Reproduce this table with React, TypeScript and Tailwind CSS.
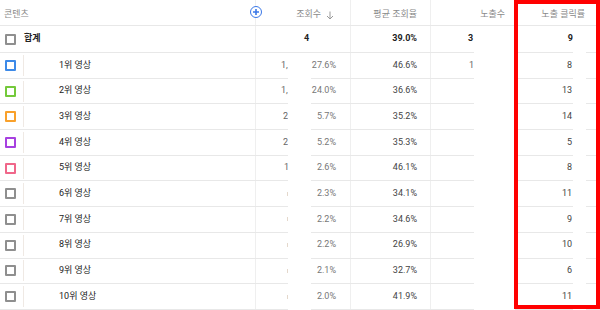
import React from "react";

const rows = [
  { rank: 1, box: "border-[#3d8ae8]", views: "1,", vw: 7, share: "27.6%", avg: "46.6%", imp: "1", ctr: "8" },
  { rank: 2, box: "border-[#74c93b]", views: "1,", vw: 7, share: "24.0%", avg: "36.6%", imp: "", ctr: "13" },
  { rank: 3, box: "border-[#f9a12b]", views: "2", vw: 5, share: "5.7%", avg: "35.2%", imp: "", ctr: "14" },
  { rank: 4, box: "border-[#a740e0]", views: "2", vw: 5, share: "5.2%", avg: "35.3%", imp: "", ctr: "5" },
  { rank: 5, box: "border-[#f0678a]", views: "1", vw: 4, share: "2.6%", avg: "46.1%", imp: "", ctr: "8" },
  { rank: 6, box: "border-[#8f8f8f]", views: "", vw: 0, share: "2.3%", avg: "34.1%", imp: "", ctr: "11" },
  { rank: 7, box: "border-[#8f8f8f]", views: "", vw: 0, share: "2.2%", avg: "34.6%", imp: "", ctr: "9" },
  { rank: 8, box: "border-[#8f8f8f]", views: "", vw: 0, share: "2.2%", avg: "26.9%", imp: "", ctr: "10" },
  { rank: 9, box: "border-[#8f8f8f]", views: "", vw: 0, share: "2.1%", avg: "32.7%", imp: "", ctr: "6" },
  { rank: 10, box: "border-[#8f8f8f]", views: "", vw: 0, share: "2.0%", avg: "41.9%", imp: "", ctr: "11" },
];

const Box = ({ cls }: { cls: string }) => (
  <div className={`w-[11px] h-[11px] rounded-[1px] shrink-0 border-2 ${cls}`} />
);

const App = () => {
  return (
    <div
      className="relative w-[600px] h-[310px] overflow-hidden bg-white text-[9px] text-[#333]"
      style={{ fontFamily: "Roboto, 'Noto Sans CJK KR', sans-serif" }}
    >
      {/* header */}
      <div className="grid grid-cols-[255px_95px_80px_85px_85px] h-[26px] border-b border-[#e8e8e8] text-[#8a8a8a]">
        <div className="flex items-center pt-[5px] pl-[4px]">콘텐츠</div>
        <div className="relative border-l border-[#efefef] flex items-center justify-end pt-[5px] pr-[16px] gap-[5px]">
          <span>조회수</span>
          <svg width="8" height="9" viewBox="0 0 8 9">
            <path d="M4 0.5v7.5M1 5l3 3 3-3" stroke="#9a9a9a" strokeWidth="1" fill="none" />
          </svg>
          <div className="absolute left-[-6px] top-[6px] w-[12px] h-[12px] rounded-full border-[1.3px] border-[#3b78e7] bg-white flex items-center justify-center">
            <svg width="8" height="8" viewBox="0 0 8 8">
              <path d="M4 1v6M1 4h6" stroke="#3b78e7" strokeWidth="1.6" />
            </svg>
          </div>
        </div>
        <div className="border-l border-[#efefef] flex items-center justify-end pt-[5px] pr-[13px]">평균 조회율</div>
        <div className="border-l border-[#efefef] flex items-center justify-end pt-[5px] pr-[10px]">노출수</div>
        <div className="border-l border-[#efefef] flex items-center justify-end pt-[5px] pr-[15px]">노출 클릭률</div>
      </div>

      {/* total */}
      <div className="grid grid-cols-[255px_95px_80px_85px_85px] h-[27px] border-b border-[#e8e8e8] font-bold text-[#222]">
        <div className="flex items-center pl-[5px] gap-[8px]">
          <Box cls="border-[#8f8f8f]" />
          <span>합계</span>
        </div>
        <div className="border-l border-[#efefef] flex items-center pl-[48px]">4</div>
        <div className="border-l border-[#efefef] flex items-center justify-end pr-[13px]">39.0%</div>
        <div className="relative border-l border-[#efefef] flex items-center pl-[37px]">
          <span>3</span>
          <div className="absolute left-[43px] right-0 top-0 bottom-[-1px] bg-white" />
        </div>
        <div className="relative border-l border-[#efefef] flex items-center justify-end pr-[27px]">
          9
          <div className="absolute right-[14px] w-[13px] top-0 bottom-[-1px] bg-white" />
        </div>
      </div>

      {rows.map((r) => (
        <div
          key={r.rank}
          className="grid grid-cols-[255px_95px_80px_85px_85px] h-[25.7px] border-b border-[#e8e8e8]"
        >
          <div className="flex items-center pl-[5px]">
            <Box cls={r.box} />
            <div className="ml-[7px] h-[21px] border-l border-[#efe9e4]" />
            <span className="ml-[35px] text-[#222]">{r.rank}위 영상</span>
          </div>
          <div className="relative border-l border-[#efefef] flex items-center">
            <span
              className="absolute top-0 bottom-0 flex items-center overflow-hidden whitespace-nowrap text-[#666]"
              style={{ left: 32 - r.vw, width: r.vw }}
            >
              {r.views}
            </span>
            {r.views === "" && (
              <div className="absolute left-[31px] w-px h-[4px] bg-[#e4d8cc]" />
            )}
            <div className="absolute left-[32px] w-[23px] top-0 bottom-[-1px] bg-white" />
            <span className="ml-auto pr-[14px] text-[#777]">{r.share}</span>
          </div>
          <div className="border-l border-[#efefef] flex items-center justify-end pr-[13px] text-[#444]">
            {r.avg}
          </div>
          <div className="relative border-l border-[#efefef] flex items-center pl-[38px] text-[#666]">
            <span>{r.imp}</span>
            <div className="absolute left-[43px] right-0 top-0 bottom-[-1px] bg-white" />
          </div>
          <div className="relative border-l border-[#efefef] flex items-center justify-end pr-[28px] text-[#444]">
            {r.ctr}
            <div className="absolute right-[14px] w-[13px] top-0 bottom-[-1px] bg-white" />
          </div>
        </div>
      ))}

      {/* red highlight box */}
      <div className="absolute left-[514px] top-0 w-[86px] h-[309px] border-[4px] border-[#ff0000]" />
    </div>
  );
};

export default App;
